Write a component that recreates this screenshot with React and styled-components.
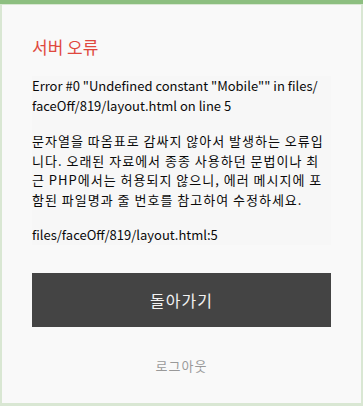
import React from 'react'
import styled, { createGlobalStyle } from 'styled-components'

const Global = createGlobalStyle`
  html, body { margin: 0; padding: 0; }
  body {
    background: #dfe9da;
    font-family: "Noto Sans CJK KR", sans-serif;
  }
`

const Page = styled.div`
  width: 363px;
  height: 406px;
  box-sizing: border-box;
  border-top: 4px solid #8dbf80;
  padding: 1px 2px 3px 2px;
  background: #d9e7d3;
  display: flex;
`

const Card = styled.div`
  flex: 1;
  background: #f9f9f9;
  padding: 29px 30px 0 30px;
  display: flex;
  flex-direction: column;
`

const Title = styled.h2`
  margin: 0 0 16px 0;
  font-size: 17px;
  font-weight: 400;
  color: #e0483e;
  line-height: 26px;
`

const Message = styled.div`
  display: flex;
  flex-direction: column;
  gap: 16px;
  background: #f7f7f7;
`

const Block = styled.p`
  margin: 0;
  font-size: 13px;
  line-height: 19.5px;
  color: #0a0a0a;
  letter-spacing: ${p => (p.$wide ? '1px' : '0')};
`

const Button = styled.button`
  margin-top: 28px;
  height: 54px;
  border: 0;
  background: #444;
  color: #f2f2f2;
  font-family: "Noto Sans CJK KR", sans-serif;
  font-size: 16px;
  letter-spacing: 1px;
  cursor: pointer;
`

const Logout = styled.a`
  margin-top: 29px;
  text-align: center;
  font-size: 13px;
  line-height: 19.5px;
  letter-spacing: 1px;
  color: #999;
`

export default function App() {
  return (
    <>
      <Global />
      <Page>
        <Card>
          <Title>서버 오류</Title>
          <Message>
            <Block>Error #0 "Undefined constant "Mobile"" in files/<wbr />faceOff/819/layout.html on line 5</Block>
            <Block $wide>
              문자열을 따옴표로 감싸지 않아서 발생하는 오류입니다. 오래된 자료에서 종종 사용하던 문법이나 최근 PHP에서는 허용되지 않으니, 에러 메시지에 포함된 파일명과 줄 번호를 참고하여 수정하세요.
            </Block>
            <Block>files/faceOff/819/layout.html:5</Block>
          </Message>
          <Button>돌아가기</Button>
          <Logout>로그아웃</Logout>
        </Card>
      </Page>
    </>
  )
}
